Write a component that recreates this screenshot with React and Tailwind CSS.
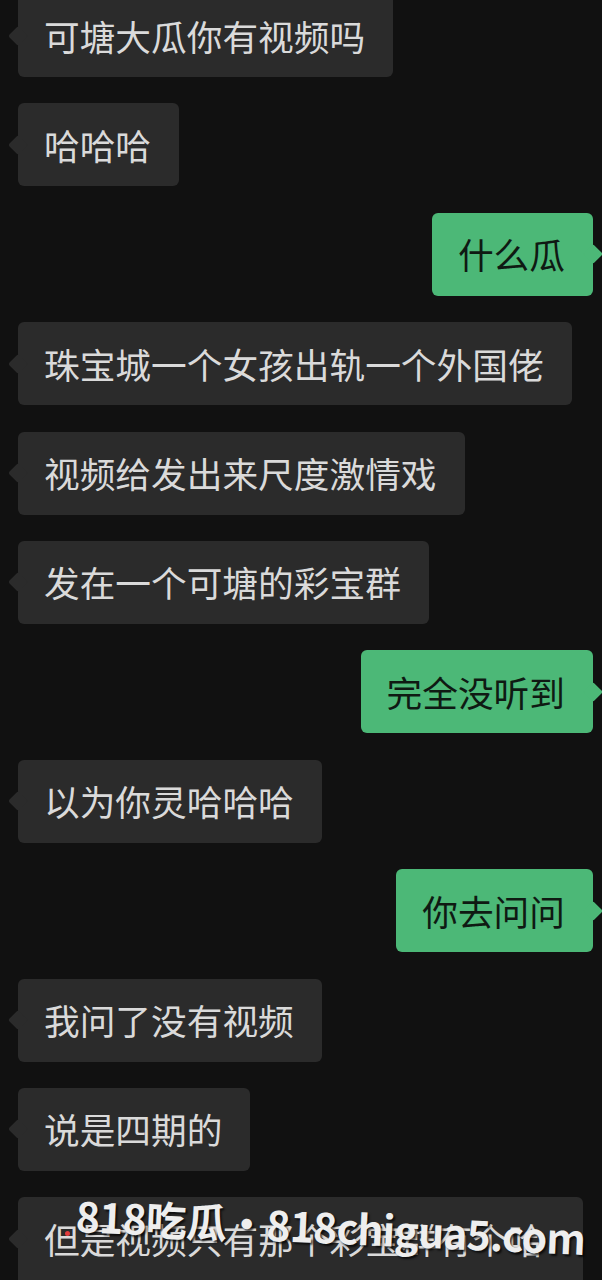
import React from "react";

const messages = [
  { side: "l", text: "可塘大瓜你有视频吗" },
  { side: "l", text: "哈哈哈" },
  { side: "r", text: "什么瓜" },
  { side: "l", text: "珠宝城一个女孩出轨一个外国佬" },
  { side: "l", text: "视频给发出来尺度激情戏" },
  { side: "l", text: "发在一个可塘的彩宝群" },
  { side: "r", text: "完全没听到" },
  { side: "l", text: "以为你灵哈哈哈" },
  { side: "r", text: "你去问问" },
  { side: "l", text: "我问了没有视频" },
  { side: "l", text: "说是四期的" },
  { side: "l", text: "但是视频只有那个彩宝群有个哈哈" },
];

const Bubble = ({ side, text }) => {
  const right = side === "r";
  return (
    <div className={right ? "flex justify-end pr-[9px]" : "flex pl-[18px]"}>
      <div
        className={
          right
            ? "relative max-w-[565px] rounded-[6px] bg-[#4cb877] py-[11.5px] pl-[26px] pr-[28px] text-[#0f1a13]"
            : "relative max-w-[565px] rounded-[6px] bg-[#2b2b2b] py-[11.5px] pl-[26px] pr-[28px] text-[#dadada]"
        }
      >
        <span
          className={
            right
              ? "absolute top-[34.5px] -right-[7px] h-[14px] w-[14px] rotate-45 rounded-[2px] bg-[#4cb877]"
              : "absolute top-[34.5px] -left-[7px] h-[14px] w-[14px] rotate-45 rounded-[2px] bg-[#2b2b2b]"
          }
        />
        <p className="relative text-[35.7px] leading-[60px]">{text}</p>
      </div>
    </div>
  );
};

export default function App() {
  return (
    <div
      className="relative h-[1280px] w-full overflow-hidden bg-[#111111]"
      style={{ fontFamily: '"Noto Sans CJK SC", "Noto Sans", sans-serif' }}
    >
      <div className="-mt-[6px] flex flex-col gap-[26.4px]">
        {messages.map((m, i) => (
          <Bubble key={i} side={m.side} text={m.text} />
        ))}
      </div>

      {/* watermark */}
      <span className="absolute left-[65px] top-[1231px] h-[5px] w-[5px] rounded-full bg-[#e23b3b]" />
      <div className="absolute left-[76px] top-[1194px] origin-left rotate-[2.6deg] whitespace-nowrap text-[41px] font-bold leading-none tracking-[-0.8px] text-[#eeeeee] [text-shadow:2px_2px_2px_rgba(0,0,0,0.7)]">
        818吃瓜·818chigua5.com
      </div>
    </div>
  );
}
